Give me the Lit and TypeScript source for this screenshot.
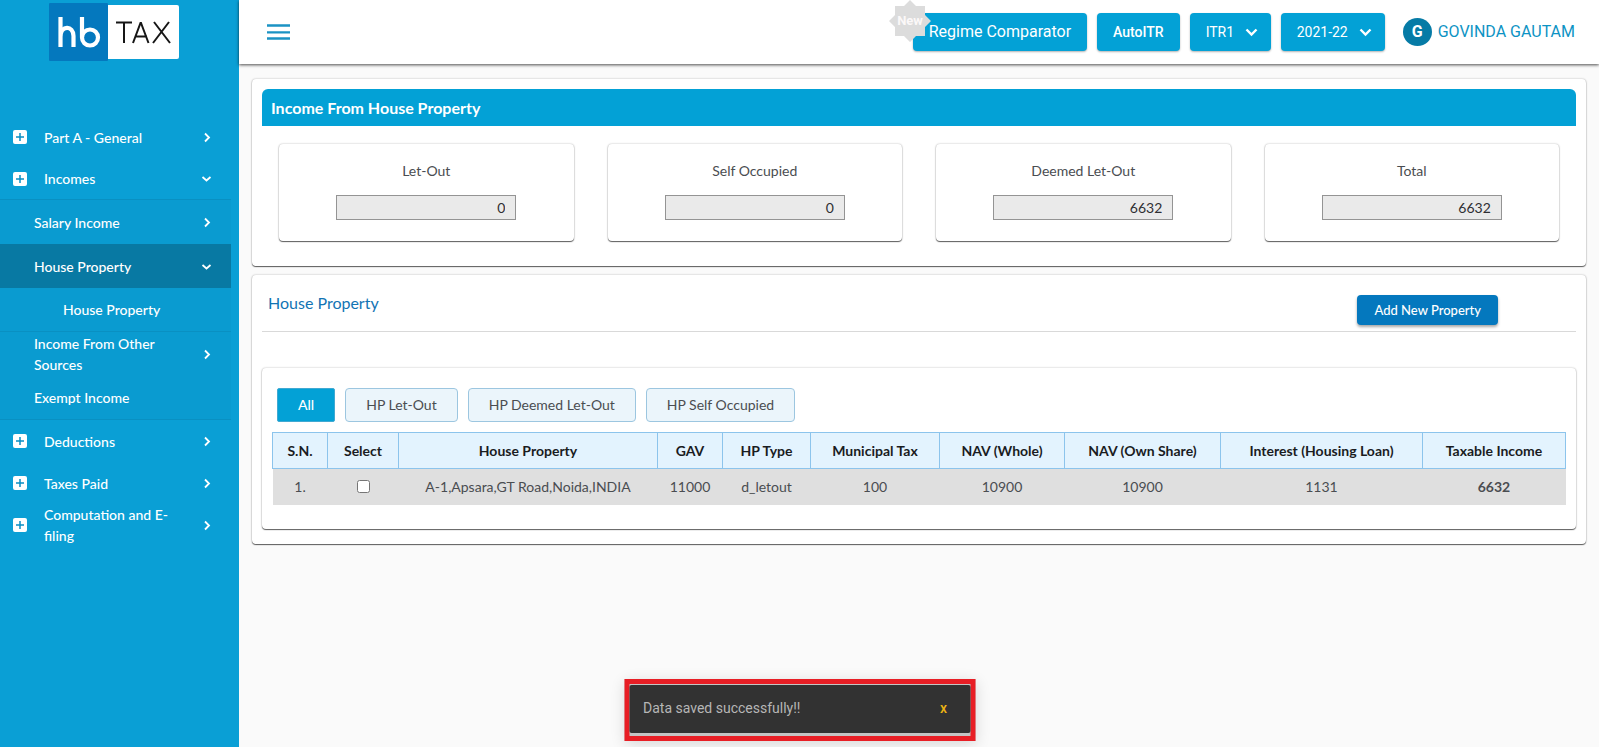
import { LitElement, html, css, nothing } from "lit";
import { customElement, property, state } from "lit/decorators.js";
import { classMap } from "lit/directives/class-map.js";

type NavItem = {
  label: string;
  level: 0 | 1 | 2;
  arrow?: "right" | "down";
  active?: boolean;
  rule?: boolean;
};

const NAV: NavItem[] = [
  { label: "Part A - General", level: 0, arrow: "right" },
  { label: "Incomes", level: 0, arrow: "down", rule: true },
  { label: "Salary Income", level: 1, arrow: "right" },
  { label: "House Property", level: 1, arrow: "down", active: true },
  { label: "House Property", level: 2, rule: true },
  { label: "Income From Other Sources", level: 1, arrow: "right" },
  { label: "Exempt Income", level: 1, rule: true },
  { label: "Deductions", level: 0, arrow: "right" },
  { label: "Taxes Paid", level: 0, arrow: "right" },
  { label: "Computation and E-filing", level: 0, arrow: "right" },
];

const TOTALS = [
  { id: "let-out", label: "Let-Out", value: "0" },
  { id: "self-occupied", label: "Self Occupied", value: "0" },
  { id: "deemed", label: "Deemed Let-Out", value: "6632" },
  { id: "total", label: "Total", value: "6632" },
];

const TABS = ["All", "HP Let-Out", "HP Deemed Let-Out", "HP Self Occupied"];

const COLUMNS = [
  { label: "S.N.", share: 55 },
  { label: "Select", share: 71 },
  { label: "House Property", share: 259 },
  { label: "GAV", share: 65 },
  { label: "HP Type", share: 88 },
  { label: "Municipal Tax", share: 129 },
  { label: "NAV (Whole)", share: 125 },
  { label: "NAV (Own Share)", share: 156 },
  { label: "Interest (Housing Loan)", share: 202 },
  { label: "Taxable Income", share: 143 },
];
const SHARE_SUM = COLUMNS.reduce((sum, c) => sum + c.share, 0);

@customElement("side-nav")
export class SideNav extends LitElement {
  static styles = css`
    :host {
      display: block;
      box-sizing: border-box;
      width: 239px;
      flex: none;
      background: #0a9fd5;
      color: #fff;
      font-family: Lato, sans-serif;
    }
    .logo {
      display: flex;
      align-items: center;
      margin: 3px 0 55px 49px;
      width: 130px;
      text-decoration: none;
    }
    .logo svg {
      display: block;
    }
    .list {
      list-style: none;
      margin: 0 8px 0 0;
      padding: 0;
    }
    .item {
      display: flex;
      align-items: center;
      box-sizing: border-box;
      width: 100%;
      min-height: 42px;
      padding: 0 18px 0 13px;
      border: 0;
      background: transparent;
      color: inherit;
      font: 500 14px/21px Lato, sans-serif;
      text-align: left;
      text-decoration: none;
      cursor: pointer;
    }
    .level-1,
    .level-2 {
      min-height: 44px;
      padding-left: 34px;
      background: #0a9bd0;
    }
    .level-2 {
      padding-left: 63px;
    }
    .active {
      background: #0879a3;
    }
    .rule {
      border-bottom: 1px solid #0990c2;
    }
    .plus {
      flex: none;
      margin-right: 17px;
    }
    .label {
      flex: 1;
      padding-right: 28px;
    }
    .arrow {
      flex: none;
    }
  `;

  private arrow(dir?: "right" | "down") {
    if (!dir) return nothing;
    const d = dir === "right" ? "M4 1.5 8 5.5 4 9.5" : "M1.5 4 5.5 7.5 9.5 4";
    return html`<svg class="arrow" width="12" height="11" viewBox="0 0 12 11" aria-hidden="true">
      <path d=${d} fill="none" stroke="#fff" stroke-width="1.8" />
    </svg>`;
  }

  render() {
    return html`
      <a class="logo" href="#" aria-label="hb TAX">
        <svg width="130" height="58" viewBox="0 0 130 58" aria-hidden="true">
          <rect x="57" y="2" width="73" height="54" rx="2" fill="#fff" />
          <rect width="59" height="58" rx="1" fill="#0478be" />
          <g fill="none" stroke="#fff" stroke-width="4.2">
            <path d="M11.500 14V44M11.500 34C11.500 22 24.500 22 24.500 33V44" />
            <path d="M33 14V34" />
            <circle cx="41" cy="34.500" r="8" />
          </g>
          <g fill="none" stroke="#161616" stroke-width="2">
            <path d="M67 19.500H83M75 19.500V40" />
            <path d="M84 40 91.500 20H92L99.500 40M86 33.500H98" />
            <path d="M105 19 121 40M120 19 104 40" />
          </g>
        </svg>
      </a>
      <nav aria-label="Return sections">
        <ul class="list">
          ${NAV.map(
            (item) => html`<li>
              <a
                href="#"
                class=${classMap({
                  item: true,
                  [`level-${item.level}`]: true,
                  active: !!item.active,
                  rule: !!item.rule,
                })}
              >
                ${item.level === 0
                  ? html`<svg class="plus" width="14" height="14" viewBox="0 0 14 14" aria-hidden="true">
                      <rect width="14" height="14" rx="2" fill="#fff" />
                      <path d="M7 3V11M3 7H11" stroke="#0a8fc4" stroke-width="1.500" />
                    </svg>`
                  : nothing}
                <span class="label">${item.label}</span>
                ${this.arrow(item.arrow)}
              </a>
            </li>`
          )}
        </ul>
      </nav>
    `;
  }
}

@customElement("top-bar")
export class TopBar extends LitElement {
  static styles = css`
    :host {
      display: block;
      position: relative;
      font-family: Roboto, sans-serif;
    }
    .bar {
      display: flex;
      align-items: center;
      gap: 10px;
      height: 64px;
      box-sizing: border-box;
      padding: 0 24px 0 28px;
      background: #fff;
      box-shadow: 0 1px 3px rgba(0, 0, 0, 0.7);
    }
    .menu {
      display: flex;
      margin: 0 auto 0 0;
      padding: 0;
      border: 0;
      background: none;
      cursor: pointer;
    }
    .btn,
    .select {
      box-sizing: border-box;
      height: 38px;
      border: 0;
      border-radius: 4px;
      background: #03a1d6;
      box-shadow: 0 1px 2px rgba(0, 0, 0, 0.3);
      color: #fff;
      font: 400 14px/36px Roboto, sans-serif;
      cursor: pointer;
    }
    .btn {
      padding: 0 16px;
      font-weight: 500;
    }
    .wide {
      position: relative;
      font-size: 16px;
      font-weight: 400;
    }
    .badge {
      position: absolute;
      left: -24px;
      top: -13px;
    }
    .picker {
      position: relative;
      display: block;
    }
    .select {
      appearance: none;
      display: block;
      padding: 0 36px 0 16px;
    }
    .chev {
      position: absolute;
      right: 13px;
      top: 15px;
      pointer-events: none;
    }
    .user {
      display: flex;
      align-items: center;
      gap: 6px;
      margin-left: 8px;
      padding: 0;
      border: 0;
      background: none;
      color: #0d93c4;
      font: 400 16px/28px Roboto, sans-serif;
      cursor: pointer;
    }
    .avatar {
      width: 29px;
      height: 28px;
      border-radius: 50%;
      background: #067ba6;
      color: #fff;
      font-weight: 700;
      text-align: center;
    }
  `;

  private picker(label: string, value: string) {
    return html`<label class="picker">
      <select class="select" aria-label=${label}>
        <option>${value}</option>
      </select>
      <svg class="chev" width="13" height="9" viewBox="0 0 13 9" aria-hidden="true">
        <path d="M1.500 1.500 6.500 6.500 11.500 1.500" fill="none" stroke="#fff" stroke-width="2.400" />
      </svg>
    </label>`;
  }

  render() {
    return html`
      <header class="bar">
        <button class="menu" aria-label="Toggle menu">
          <svg width="23" height="18" viewBox="0 0 23 18" aria-hidden="true">
            <path d="M0 2.500H23M0 9.300H23M0 15.500H23" stroke="#1b93c4" stroke-width="2.300" />
          </svg>
        </button>
        <button class="btn wide">
          Regime Comparator
          <svg class="badge" width="42" height="42" viewBox="0 0 42 42" aria-hidden="true">
            <path
              d="M21 0 27 6H36V15L42 21 36 27V36H27L21 42 15 36H6V27L0 21 6 15V6H15Z"
              fill="#dcdcdc"
            />
            <text x="21" y="25" text-anchor="middle" fill="#fbf8f8" font-family="Roboto" font-size="13" font-weight="700">New</text>
          </svg>
        </button>
        <button class="btn">AutoITR</button>
        ${this.picker("Return form", "ITR1")} ${this.picker("Assessment year", "2021-22")}
        <button class="user"><span class="avatar">G</span><span>GOVINDA GAUTAM</span></button>
      </header>
    `;
  }
}

@customElement("snack-bar")
export class SnackBar extends LitElement {
  @property() message = "";
  @state() private open = true;

  static styles = css`
    :host {
      position: fixed;
      bottom: 6px;
      left: 50%;
      transform: translateX(-50%);
    }
    .frame {
      padding: 1px 0 3px;
      border: 5px solid #e81e25;
      background: #c4c4c4;
      box-shadow: 0 3px 14px rgba(0, 0, 0, 0.14);
    }
    .body {
      display: flex;
      align-items: center;
      justify-content: space-between;
      box-sizing: border-box;
      min-width: 341px;
      height: 48px;
      padding: 0 23px 2px 14px;
      border-radius: 2px;
      background: #323232;
      color: #b6b6b6;
      font: 400 14px/20px Roboto, sans-serif;
    }
    .close {
      padding: 0;
      border: 0;
      background: none;
      color: #ecb414;
      font: 500 14px/20px Roboto, sans-serif;
      cursor: pointer;
    }
  `;

  render() {
    if (!this.open) return nothing;
    return html`<div class="frame">
      <div class="body" role="status">
        <span>${this.message}</span>
        <button class="close" @click=${() => (this.open = false)}>x</button>
      </div>
    </div>`;
  }
}

@customElement("app-root")
export class AppRoot extends LitElement {
  @state() private tab = 0;

  static styles = css`
    :host {
      display: flex;
      min-height: 100vh;
      background: #fafafa;
      color: #4a4d51;
      font: 400 14px/20px Lato, sans-serif;
    }
    .main {
      flex: 1;
      min-width: 0;
    }
    .content {
      display: grid;
      gap: 9px;
      padding: 15px 13px;
    }
    .card {
      border-radius: 4px;
      background: #fff;
      box-shadow: 0 1px 1px rgba(0, 0, 0, 0.6), 0 0 2px rgba(0, 0, 0, 0.3);
    }
    .panel {
      padding: 10px;
    }
    .listing {
      padding-bottom: 15px;
    }
    .heading {
      margin: 0;
      padding: 1px 9px 0;
      border-radius: 6px 6px 0 0;
      background: #03a1d6;
      color: #fff;
      font-size: 16px;
      font-weight: 700;
      line-height: 36px;
    }
    .totals {
      display: grid;
      grid-template-columns: repeat(4, 1fr);
      gap: 34px;
      padding: 18px 17px 15px;
    }
    .total {
      display: flex;
      flex-direction: column;
      align-items: center;
      gap: 14px;
      padding: 17px 16px 21px;
    }
    .amount {
      box-sizing: border-box;
      width: 180px;
      height: 25px;
      padding: 0 10px;
      border: 1px solid #949494;
      background: #eaeaea;
      color: #2f2f33;
      font: 400 14px/20px Lato, sans-serif;
      text-align: right;
    }
    .title-row {
      display: flex;
      align-items: flex-end;
      justify-content: space-between;
      padding: 8px 78px 6px 6px;
      border-bottom: 1px solid #d9d9d9;
    }
    .title {
      margin: 0 0 12px;
      color: #1274b4;
      font-size: 16px;
      font-weight: 400;
      line-height: 20px;
    }
    .add {
      height: 30px;
      padding: 0 17px;
      border: 0;
      border-radius: 4px;
      background: #0478be;
      box-shadow: 0 2px 3px rgba(0, 0, 0, 0.35);
      color: #fff;
      font: 500 13px/28px Lato, sans-serif;
      cursor: pointer;
    }
    .records {
      margin-top: 36px;
      padding: 20px 10px 24px;
    }
    .tabs {
      display: flex;
      gap: 10px;
      padding: 0 5px 10px;
    }
    .tab {
      height: 34px;
      padding: 0 20px;
      border: 1px solid #9cc6e0;
      border-radius: 4px;
      background: #ebf5fb;
      color: #4a4d51;
      font: 400 14px/20px Lato, sans-serif;
      cursor: pointer;
    }
    .selected {
      border-color: #40a9d2;
      border-radius: 2px;
      background: #03a1d6;
      color: #fff;
      font-weight: 500;
    }
    .grid {
      width: 100%;
      border-collapse: collapse;
      table-layout: fixed;
    }
    .grid th {
      height: 36px;
      padding: 0;
      border: 1px solid #8cc4ec;
      background: #e3f3fe;
      color: #1a1c1f;
      font-weight: 700;
      box-sizing: border-box;
    }
    .grid td {
      height: 36px;
      padding: 0;
      background: #dfdfdf;
      text-align: center;
      box-sizing: border-box;
    }
    .grid .strong {
      font-weight: 700;
    }
    .tick {
      display: block;
      margin: 0 auto;
    }
  `;

  render() {
    return html`
      <side-nav></side-nav>
      <div class="main">
        <top-bar></top-bar>
        <main class="content">
          <section class="card panel">
            <h1 class="heading">Income From House Property</h1>
            <div class="totals">
              ${TOTALS.map(
                (t) => html`<div class="card total">
                  <label for=${t.id}>${t.label}</label>
                  <input class="amount" id=${t.id} .value=${t.value} readonly />
                </div>`
              )}
            </div>
          </section>

          <section class="card panel listing">
            <div class="title-row">
              <h2 class="title">House Property</h2>
              <button class="add">Add New Property</button>
            </div>
            <div class="card records">
              <div class="tabs">
                ${TABS.map(
                  (label, i) => html`<button
                    class=${classMap({ tab: true, selected: this.tab === i })}
                    aria-pressed=${this.tab === i ? "true" : "false"}
                    @click=${() => (this.tab = i)}
                  >
                    ${label}
                  </button>`
                )}
              </div>
              <table class="grid">
                <colgroup>
                  ${COLUMNS.map((c) => html`<col style="width:${(c.share / SHARE_SUM) * 100}%" />`)}
                </colgroup>
                <thead>
                  <tr>
                    ${COLUMNS.map((c) => html`<th scope="col">${c.label}</th>`)}
                  </tr>
                </thead>
                <tbody>
                  <tr>
                    <td>1.</td>
                    <td><input class="tick" type="checkbox" aria-label="Select property 1" /></td>
                    <td>A-1,Apsara,GT Road,Noida,INDIA</td>
                    <td>11000</td>
                    <td>d_letout</td>
                    <td>100</td>
                    <td>10900</td>
                    <td>10900</td>
                    <td>1131</td>
                    <td class="strong">6632</td>
                  </tr>
                </tbody>
              </table>
            </div>
          </section>
        </main>
      </div>
      <snack-bar message="Data saved successfully!!"></snack-bar>
    `;
  }
}
